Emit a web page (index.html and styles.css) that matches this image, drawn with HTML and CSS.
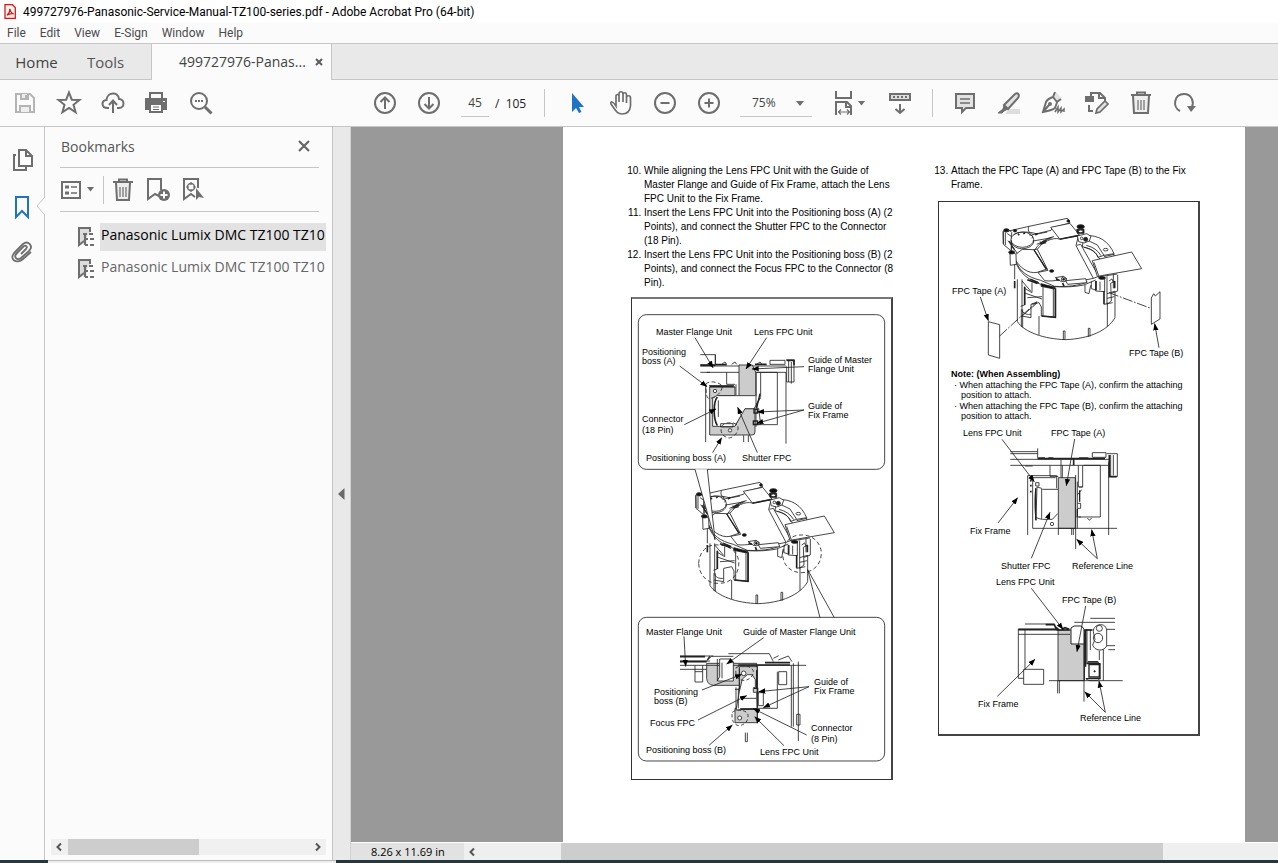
FILE: index.html
```html
<!DOCTYPE html>
<html lang="en">
<head>
<meta charset="utf-8">
<meta name="viewport" content="width=device-width, initial-scale=1">
<title>499727976-Panasonic-Service-Manual-TZ100-series.pdf - Adobe Acrobat Pro (64-bit)</title>
<link rel="stylesheet" href="styles.css">
</head>
<body>
<div class="app">
  <header class="titlebar">
    <svg class="app-icon" viewBox="0 0 12 15" aria-hidden="true"><path d="M1 .7H8.5L11.3 3.5V14.3H1Z" fill="#fff1f0" stroke="#c8201c" stroke-width="1.3"/><path d="M3 11.2C5 9.5 6 7 5.9 4.8C6.5 8 8 9.5 9.7 9.8C7 9.2 5 9.8 3 11.2Z" fill="none" stroke="#c8201c" stroke-width="1.2"/></svg>
    <span>499727976-Panasonic-Service-Manual-TZ100-series.pdf - Adobe Acrobat Pro (64-bit)</span>
  </header>
  <nav class="menubar" aria-label="Menu">
    <button>File</button><button>Edit</button><button>View</button><button>E-Sign</button><button>Window</button><button>Help</button>
  </nav>
  <div class="tabs">
    <button class="tab">Home</button>
    <button class="tab tab-tools">Tools</button>
    <div class="tab-active"><span>499727976-Panas...</span>
      <button class="tab-close" aria-label="Close tab"><svg viewBox="0 0 8 8"><path d="M1 1L7 7M7 1L1 7" stroke="#5c5c5c" stroke-width="2"/></svg></button>
    </div>
  </div>

  <div class="toolbar" role="toolbar" aria-label="Tools">
    <div class="group">
      <button class="tool pale" aria-label="Save"><svg viewBox="-15 -15 30 30"><path d="M-9-9H5L9-5V9H-9Z"/><path d="M-4-9V-4H3V-9M-5 9V3H5V9" fill="#eee"/><path d="M1-8V-5"/></svg></button>
      <button class="tool" aria-label="Star"><svg viewBox="-15 -15 30 30"><path d="M0-10.5L2.8-3.3 10.5-3 4.5 1.8 6.6 9.3 0 5-6.6 9.3-4.5 1.8-10.5-3-2.8-3.3Z"/></svg></button>
      <button class="tool" aria-label="Upload"><svg viewBox="-15 -15 30 30"><path d="M-4 5H-5.5C-12 5-12-3-6.5-3C-6-11 5-12 6-4C12-4 12 5 6 5H4M0 10V-2M-4 2L0-2.5 4 2"/></svg></button>
      <button class="tool" aria-label="Print"><svg viewBox="-14 -15 30 30"><path d="M-6-4V-10H6V-4"/><path d="M-10-4H10V6H-10Z" fill="#6e6e6e"/><path d="M-6 1H6V9H-6Z" fill="#fbfbfb"/><path d="M-3 4H3M-3 6.500H3" stroke-width="1"/><path d="M7-1.500H9" stroke="#fff" stroke-width="1"/></svg></button>
      <button class="tool" aria-label="Search"><svg viewBox="-15 -15 30 30"><circle cx="-2" cy="-2" r="8"/><path d="M4 4L10.500 10.500" stroke-width="3"/><path d="M-6-2H-4M-3-2H-1M0-2H2"/></svg></button>
    </div>
    <div class="group group-page">
      <button class="tool" aria-label="Previous page"><svg viewBox="-15 -15 30 30"><circle r="10"/><path d="M0 6V-5M-4.500-1L0-5.500 4.500-1"/></svg></button>
      <button class="tool" aria-label="Next page"><svg viewBox="-15 -15 30 30"><circle r="10"/><path d="M0-6V5M-4.500 1L0 5.500 4.500 1"/></svg></button>
      <input class="page-no" value="45" aria-label="Page number">
      <span class="page-count">/&nbsp; 105</span>
    </div>
    <div class="group group-view">
      <button class="tool" aria-label="Select"><svg viewBox="-15 -15 30 30"><path d="M-5-10V9L-1 5 2 10 4.500 9 2 4H7Z" fill="#1f72c6" stroke="none"/></svg></button>
      <button class="tool" aria-label="Hand"><svg viewBox="-15 -15 30 30"><path d="M-5 3V-7C-5-9-2-9-2-7V-1V-9C-2-12 2-12 2-9V-1V-8C2-11 5.500-11 5.500-8V0V-5C5.500-8 9.500-8 9.500-5V3C9 8 6 11 1 11C-4 11-5 8-10 1C-11-2-8-2-5 3Z" stroke-width="1.700"/></svg></button>
      <button class="tool" aria-label="Zoom out"><svg viewBox="-15 -15 30 30"><circle r="10"/><path d="M-4.500 0H4.500"/></svg></button>
      <button class="tool" aria-label="Zoom in"><svg viewBox="-15 -15 30 30"><circle r="10"/><path d="M-4.500 0H4.500M0-4.500V4.500"/></svg></button>
      <div class="zoom"><select aria-label="Zoom level"><option>75%</option></select><svg class="zoom-caret" viewBox="0 0 8 5"><path d="M0 0H8L4 5Z"/></svg></div>
      <button class="tool tool-fit" aria-label="Fit width"><svg viewBox="-15 -15 30 30"><path d="M-7-12V-5H8V-12M-7 12V-1H4L8 3V12M3-1V4H8"/><path d="M-4 9H6M-2 6.500L-4.500 9-2 11.500M4 6.500L6.500 9 4 11.500" stroke-width="1.200"/></svg><svg class="caret" viewBox="0 0 8 5"><path d="M0 0H7L3.500 4.500Z"/></svg></button>
      <button class="tool" aria-label="Page display"><svg viewBox="-15 -15 30 30"><path d="M-10-9H10V-3H-10Z" fill="#ddd"/><path d="M-7-6H-5M-3-6H-1M1-6H3M5-6H7M0 1V10M-4.500 6L0 10 4.500 6"/></svg></button>
    </div>
    <div class="group group-edit">
      <button class="tool" aria-label="Comment"><svg viewBox="-15 -15 30 30"><path d="M-9-9H9V5H1L-3 9V5H-9Z" fill="#e2e2e2"/><path d="M-5-4H5M-5 0H5" stroke-width="1.300"/></svg></button>
      <button class="tool" aria-label="Highlight"><svg viewBox="-15 -15 30 30"><path d="M0 6H11V11H-4Z" fill="#ddd" stroke="none"/><path d="M-5 2L6-9C9-11 11-8 9-5L-1 6Z" fill="#e2e2e2"/><path d="M-5 2L-1 6-5 8-7 10H-11L-6 6Z" fill="#6e6e6e" stroke-width="1"/></svg></button>
      <button class="tool" aria-label="Sign"><svg viewBox="-15 -15 30 30"><path d="M0-6L3-11 8-5 5-2Z" fill="#e2e2e2" stroke="none"/><path d="M2-11L0-6C-3-5-6-3-7-1L-10 9C-5 8 0 7 2 5C3 2 4 0 4-1L8-4M0-6L4-1M-10 9L-4 2"/><circle cx="-3" cy="1" r="1"/><path d="M2 9L5 4V9L8 5V9L11 6V9" stroke-width="1.500"/></svg></button>
      <button class="tool" aria-label="Edit PDF"><svg viewBox="-15 -15 30 30"><path d="M-6-7V-10H3L8-5V-2M2-10V-5H8M-8 2V8H-4"/><path d="M-12-7H-3V-1H-12Z" fill="#6e6e6e" stroke="none"/><path d="M-1 10L0 6 8-2 11 1 3 9Z" fill="#e2e2e2" stroke-width="1.700"/></svg></button>
      <button class="tool" aria-label="Delete"><svg viewBox="-15 -15 30 30"><path d="M-8-7L-7 10H7L8-7" fill="#eee"/><path d="M-10-8H10M-4-8V-10.500H4V-8"/><path d="M-3-3V7M0-3V7M3-3V7" stroke-width="1.200"/></svg></button>
      <button class="tool" aria-label="Rotate"><svg viewBox="-15 -15 30 30"><path d="M-5 8C-13 4-11-9-1-9C7-9 9-1 7 4"/><path d="M2 3L11 3 6 9Z" fill="#6e6e6e" stroke="none"/></svg></button>
    </div>
  </div>

  <main class="work">
    <nav class="rail" aria-label="Navigation panes">
      <button aria-label="Page thumbnails"><svg viewBox="-15 -15 30 30"><path d="M-3-10H4L10-4V6H-3ZM4-10V-4H10M-6-5H-8V10H4V7"/></svg></button>
      <button class="current" aria-label="Bookmarks"><svg viewBox="-15 -15 30 30"><path d="M-6-9H6V11L0 5-6 11Z"/></svg></button>
      <button aria-label="Attachments"><svg viewBox="-15 -15 30 30"><path d="M-1 2L4-3C6-5 4-7 2-6L-5 1C-9 5-5 9-1 6L7-1C12-6 6-12 1-8L-6-1C-15 7-5 13 1 7L9 0" stroke-width="1.800"/></svg></button>
      <svg class="notch" viewBox="0 0 8 16" aria-hidden="true"><path d="M8 0V16H7L0 8 7 0Z" fill="#fbfbfb" stroke="none"/><path d="M7 0L0 8 7 16" fill="none" stroke="#c6c6c6"/></svg>
    </nav>
    <aside class="panel">
      <div class="panel-head"><h2>Bookmarks</h2><button aria-label="Close panel"><svg viewBox="0 0 12 12"><path d="M1 1L11 11M11 1L1 11" stroke="#666" stroke-width="2.200"/></svg></button></div>
      <div class="panel-tools">
        <button class="options" aria-label="Options"><svg viewBox="-10 -15 20 30"><path d="M-9-8H9V8H-9Z"/><path d="M-6-3H-2M-6 3H-2" stroke-width="3"/><path d="M0-3H6M0 3H6" stroke-width="1.500"/></svg><svg class="caret" viewBox="0 0 8 5"><path d="M0 0H7L3.500 4.500Z"/></svg></button>
        <button class="sq" aria-label="Delete bookmark"><svg viewBox="-15 -15 30 30"><path d="M-7-7L-6 10H6L7-7" fill="#eee"/><path d="M-10-8H10M-4-8V-10.500H4V-8"/><path d="M-3-3V7M0-3V7M3-3V7" stroke-width="1.200"/></svg></button>
        <button class="sq" aria-label="New bookmark"><svg viewBox="-15 -15 30 30"><path d="M1 6L-3 4-10 9V-11H3V0"/><circle cx="6" cy="5" r="6" fill="#6e6e6e" stroke="none"/><path d="M2.500 5H9.500M6 1.500V8.500" stroke="#fff"/></svg></button>
        <button class="sq" aria-label="Find current bookmark"><svg viewBox="-15 -15 30 30"><path d="M5-2V-11H-9V9L-2 4 2 7"/><circle cx="-2" cy="-3" r="3.500" stroke-width="1.500"/><path d="M-2-8V-5M-2-1V2M-7-3H-4M0-3H3" stroke-width="1.200"/><path d="M3-2V10L6 7 11 8Z" fill="#6e6e6e" stroke="none"/></svg></button>
      </div>
      <ul class="tree">
        <li><svg viewBox="0 0 16 20"><path d="M6 14L1 18V1H12V5" fill="#ddd"/><path d="M5 7H9M7 7V18M7 12H10M7 18H10M11 7H15M12 12H16M12 18H16" stroke-width="2.200"/></svg><a class="selected" href="#page">Panasonic Lumix DMC TZ100 TZ10</a></li>
        <li><svg viewBox="0 0 16 20"><path d="M6 14L1 18V1H12V5" fill="#ddd"/><path d="M5 7H9M7 7V18M7 12H10M7 18H10M11 7H15M12 12H16M12 18H16" stroke-width="2.200"/></svg><a href="#page">Panasonic Lumix DMC TZ100 TZ10</a></li>
      </ul>
      <div class="hscroll"><svg viewBox="0 0 16 16"><path d="M10 4.500L6.500 8 10 11.500"/></svg><div class="track"><div class="thumb"></div></div><svg viewBox="0 0 16 16"><path d="M6 4.500L9.500 8 6 11.500"/></svg></div>
    </aside>
    <button class="gutter" aria-label="Collapse panel"><svg viewBox="0 0 7 12"><path d="M6.500 0V12L0 6Z" fill="#6a6a6a"/></svg></button>
    <section class="doc">
      <div class="canvas">
        <article class="page" id="page">
          <div class="column">
            <ol start="10">
              <li>While aligning the Lens FPC Unit with the Guide of<br>Master Flange and Guide of Fix Frame, attach the Lens<br>FPC Unit to the Fix Frame.</li>
              <li>Insert the Lens FPC Unit into the Positioning boss (A) (2<br>Points), and connect the Shutter FPC to the Connector<br>(18 Pin).</li>
              <li>Insert the Lens FPC Unit into the Positioning boss (B) (2<br>Points), and connect the Focus FPC to the Connector (8<br>Pin).</li>
            </ol>
            <figure class="fig fig-left">
              <svg viewBox="632 299 259 480" role="img" aria-label="Lens FPC Unit attachment">
                <defs>
                  <marker id="arrow" markerUnits="userSpaceOnUse" markerWidth="22" markerHeight="18" refX="20" refY="9" orient="auto"><path d="M0 1L21 9 0 17Z" fill="#000" stroke="none"/></marker>
                  <g id="lens">
                    <path d="M232 160V235M240 235V362C262 394 320 414 385 416C455 413 510 390 533 350V270M252 325V378M256 325V380M305 345V402M378 417V390H383V417M453 408V382H458V407M510 305V377"/>
                    <path d="M229 165C240 205 258 230 305 248C330 258 390 262 440 252L475 237M235 180C248 212 270 228 310 238L352 256C390 258 425 254 450 243M229 165L255 145L290 146 326 205 300 214C270 220 245 195 235 178M290 146L300 144 332 198 326 205"/>
                    <path d="M275 76L390 52 398 66 345 80 341 88 287 101C274 96 270 86 275 76Z" fill="#fff"/>
                    <path d="M440 104C485 100 515 122 530 158L500 163L482 169C478 155 465 145 435 137Z" fill="#fff"/>
                    <path d="M300 145C315 123 345 108 367 114L423 105 416 134 468 232 395 247C380 228 350 244 322 239L302 214L332 208Z" fill="#fff"/>
                    <path d="M418 133L430 130 484 226 468 232M292 147C310 120 335 109 350 107M298 130L340 112"/>
                    <path d="M340 79L398 67 426 102 367 114Z" fill="#fff"/>
                    <path d="M367 115L426 103M290 147L328 205" stroke-width="4"/>
                    <path d="M197 91L215 86 223 94 222 150 198 130ZM198 92V129M204 94V132M212 119L240 157M210 91L275 76M210 98L222 106V146"/>
                    <ellipse cx="255" cy="116" rx="34" ry="23" fill="#fff"/><path d="M221 117C222 135 240 145 260 143C280 140 290 130 289 118M228 102C240 92 272 90 300 99L330 93M287 120L345 110M307 123L327 126M275 101L286 105 284 112"/>
                    <path d="M500 163L480 132 455 120M530 158V178M482 169L492 177M440 139C462 142 477 155 482 169M447 133C467 138 482 148 491 164M500 167L530 160"/>
                    <path d="M465 179L583 153 613 203 480 226Z" fill="#fff"/><path d="M470 184L484 224"/>
                    <path d="M218 158L228 155 236 160 237 190 219 193Z" fill="#fff"/>
                    <path d="M254 235V330C262 340 270 341 281 340V310L305 305 312 318V345L355 349V262M317 255V346M348 260V347M262 256V312L250 316M262 276L314 294M254 240L280 270M284 245V275L262 262M270 290L314 287M281 340V350L252 345"/>
                    <path d="M354 262V349L313 345M232 240V262M262 258V312" stroke-width="5"/>
                    <path d="M475 240V270L502 272V228M488 242V268M509 226V310L522 300 520 247 533 240M541 222V270L522 277M509 278L532 271M509 292L531 287M462 241V263L475 267M482 228L540 219M500 310L526 305M443 252V274L455 278 460 253M528 222V262M515 240L524 234 528 244"/>
                    <path d="M500 270V310M532 240V262M476 240V268" stroke-width="5"/>
                    <g fill="#111"><ellipse cx="207" cy="88" rx="8" ry="5"/><ellipse cx="233" cy="89" rx="5" ry="4"/><ellipse cx="223" cy="154" rx="9" ry="5"/><ellipse cx="430" cy="77" rx="11" ry="6"/><path d="M418 85H440V97H420Z"/><ellipse cx="343" cy="210" rx="6" ry="4"/><ellipse cx="494" cy="231" rx="10" ry="4"/><path d="M216 120L233 148 228 143ZM280 234L304 244 298 248ZM312 248L354 260 350 264 311 256Z"/><circle cx="393" cy="60" r="4"/></g>
                    <path d="M420 105L448 98 461 106 456 120 440 126 424 122Z" fill="#fff"/>
                    <circle cx="445" cy="115" r="6" fill="#222"/>
                    <g fill="#fff"><ellipse cx="430" cy="91" rx="7" ry="4"/><circle cx="433" cy="112" r="4"/><path d="M354 230L378 226 389 234 372 242Z"/><circle cx="379" cy="235" r="7"/><path d="M385 239L445 233 449 245 391 250Z"/><ellipse cx="505" cy="146" rx="7" ry="4"/></g>
                    <circle cx="379" cy="235" r="3" fill="#111"/>
                    <path d="M242 102L246 99M258 98L263 96M294 102L301 97M308 129L324 124M316 122L328 120M270 236L299 247M356 234L366 238M376 246L380 256" stroke-width="5"/>
                  </g>
                </defs>
                <g class="art" transform="translate(630 297) scale(.33333)">
                  <rect x="25" y="53" width="739" height="464" rx="24"/>
                  <path d="M211 173H256V203H211M211 207H468M211 226H468M256 173V203M420 203V190H465V202H420M468 189H492V255H470V208M476 192V255M484 195V260M230 226H240M290 226V262M290 262H315M468 226V440M227 262V435M318 262V295M341 415V435M355 415V435"/>
                  <path d="M211 205H256M256 203H290M375 202H410M470 190H492V205" stroke-width="5"/><path d="M275 202L285 195 290 202M305 202L315 195 320 202M380 202L390 195 396 202"/>
                  <path d="M239 270H315V296H260L248 304V388H315L343 335H375V405Q375 414 366 414H239Z" fill="#ccc"/>
                  <path d="M327 204H367L378 228V310H327Z" fill="#ccc"/>
                  <path d="M260 296H375L392 302 372 335H345L315 387H258C249 368 250 315 260 296Z" fill="#fff" stroke="none"/>
                  <path d="M264 296H375M392 302L372 335H345L315 387"/>
                  <path d="M237 266H312V272M380 226H392V298L380 320V334H386L392 382H374M378 226V390M392 226H442V383H380M265 310V360M272 380H309V390H272Z"/>
                  <path d="M262 300C250 315 249 365 262 386M239 268H310" stroke-width="5"/>
                  <path d="M390 290L380 333M372 337H383V348H372ZM370 372H383V383H370Z" stroke-width="4"/>
                  <path d="M227 261C240 248 275 257 277 270C272 290 255 305 235 304C225 295 230 275 227 261ZM274 389C282 375 311 374 322 384C330 398 316 420 298 423C280 420 270 410 274 389Z" stroke-dasharray="12 7"/>
                  <g fill="#fff"><circle cx="255" cy="282" r="5"/><circle cx="300" cy="400" r="5"/></g>
                  <g class="leaders"><path d="M195 122L249 212"/><path d="M410 122L348 216"/><path d="M149 207L231 269"/><path d="M522 209L366 216"/><path d="M163 383L258 336"/><path d="M522 339L382 345"/><path d="M522 339L380 379"/><path d="M248 467L275 422"/><path d="M382 467L323 331"/></g>
                </g>
                <g class="art" transform="translate(630 465) scale(.33333)"><use href="#lens"/><path d="M195 13L255 224 232 13" fill="#fff"/><path d="M570 458L533 314 613 458"/><path d="M206 295C207 258 235 236 265 240C310 240 330 275 326 302C323 333 300 356 265 355C232 356 207 330 206 295ZM458 265C460 230 485 209 515 210C550 209 574 235 574 266C573 300 548 323 515 323C480 323 457 298 458 265Z" stroke-dasharray="12 8"/></g>
                <g class="art" transform="translate(630 610) scale(.33333)">
                  <rect x="25" y="22" width="739" height="431" rx="24"/>
                  <path d="M230 160H380V226H250Q231 224 230 205Z" fill="#ccc"/>
                  <path d="M328 170H382V338H315V295H328Z" fill="#ccc"/>
                  <path d="M150 138H250M150 153H240M150 166H528M150 178H230M195 166V216H218V166M195 185H218M295 131H418L430 155M230 152L245 139H310M430 145L446 137M445 150L475 138 486 155M442 185V295H380M382 168V340M446 185H470V224H446ZM484 166V350M490 160V350M505 155V393M500 313V345H510V313ZM346 368V395H352V368"/>
                  <path d="M150 140H225M150 155H230M325 165H480M405 158L480 158" stroke-width="5"/>
                  <path d="M269 147H300L310 155V213H262L269 200V160ZM337 207L352 194H366L376 209V233H370V247H380L381 297L318 300 328 245Z" fill="#fff"/>
                  <path d="M262 147V213M333 265H380M333 297H380M325 235V295M315 238H327M318 232V298M385 248H400V287H385ZM328 175V238M276 158V205" />
                  <path d="M372 235H383V251M330 297H382M380 180V233M232 150L240 138" stroke-width="4"/>
                  <path d="M318 173C335 163 360 165 370 182C370 199 358 212 338 211C324 209 315 200 318 173ZM307 307C317 297 343 299 353 310C358 328 347 345 327 347C310 345 303 327 307 307Z" stroke-dasharray="10 7"/>
                  <g fill="#fff"><circle cx="341" cy="190" r="7"/><circle cx="329" cy="324" r="6"/></g>
                  <g class="leaders"><path d="M162 79L167 169"/><path d="M401 83L290 162"/><path d="M216 240L335 193"/><path d="M204 330L350 257"/><path d="M537 230L386 245"/><path d="M537 230L400 293"/><path d="M530 375L370 296"/><path d="M237 406L307 345"/><path d="M462 407L374 320"/></g>
                </g>
                <g class="labels">
                  <text x="656" y="335">Master Flange Unit</text><text x="754" y="335">Lens FPC Unit</text><text x="642" y="355">Positioning</text><text x="642" y="364">boss (A)</text><text x="808" y="363">Guide of Master</text><text x="808" y="372">Flange Unit</text><text x="808" y="409">Guide of</text><text x="808" y="418">Fix Frame</text><text x="642" y="422">Connector</text><text x="642" y="433">(18 Pin)</text><text x="646" y="461">Positioning boss (A)</text><text x="742" y="461">Shutter FPC</text>
                  <text x="646" y="635">Master Flange Unit</text><text x="743" y="635">Guide of Master Flange Unit</text><text x="654" y="695">Positioning</text><text x="654" y="704">boss (B)</text><text x="814" y="685">Guide of</text><text x="814" y="694">Fix Frame</text><text x="650" y="726">Focus FPC</text><text x="811" y="731">Connector</text><text x="811" y="742">(8 Pin)</text><text x="646" y="753">Positioning boss (B)</text><text x="760" y="755">Lens FPC Unit</text>
                </g>
              </svg>
            </figure>
          </div>
          <div class="column">
            <ol start="13"><li>Attach the FPC Tape (A) and FPC Tape (B) to the Fix<br>Frame.</li></ol>
            <figure class="fig fig-right">
              <svg viewBox="939 202 259 532" role="img" aria-label="FPC Tape attachment">
                <g class="art" transform="translate(935 195) scale(.33333)"><use href="#lens" x="7" y="18"/><path d="M160 380L194 389V490L160 480ZM649 309L656 296 661 303 675 290V372L649 388ZM306 324L258 366M290 327L307 321"/><path d="M194 423L306 320M522 293L645 339" stroke-dasharray="30 5 5 5"/><g class="leaders"><path d="M136 306L160 377"/><path d="M672 458L659 386"/></g></g>
                <g class="art" transform="translate(935 365) scale(.33333)">
                  <path d="M226 260H308M308 250V280M226 266H308M226 283H525M226 301H522M345 301V334H370M270 303H293M278 332V510M278 332H365V370M293 347V490M290 338H362M472 276V263H513V277H472M515 266H547V335H527V270M521 290V510M535 270V331M310 278H330M340 278H355M432 278H460M430 301V366H443V301M432 366H443"/>
                  <path d="M308 281H510M416 283V301M290 347H285M290 362H285M290 380H285M523 270V335H545" stroke-width="5"/>
                  <path d="M306 366L320 370V463L303 458ZM322 373H370M322 463H352L368 446M302 370C298 405 299 440 304 466M446 301H496V456H431M427 390L440 374M428 415H437V430H428M424 456H438M457 460L463 465 470 460M302 353H312V363H302Z"/>
                  <path d="M302 370V466M434 376V410M427 432V455" stroke-width="4"/>
                  <path d="M370 338H421V490H370Z" fill="#ccc"/><path d="M378 283V338M382 301V338M293 490H546M370 490V510M410 490V510M415 490V510M422 330V552M427 350V490" /><circle cx="351" cy="477" r="5"/>
                  <g class="leaders"><path d="M201 223L298 350"/><path d="M419 222L394 362"/><path d="M189 474L248 398"/><path d="M289 580L345 442"/><path d="M487 581L425 523"/><path d="M487 581L470 494"/></g>
                </g>
                <g class="art" transform="translate(935 570) scale(.33333)">
                  <path d="M369 180H448V332H369Z" fill="#ccc"/><path d="M250 177H365M250 193H405M250 177V325H266M270 180V298M266 298H326V343H266ZM270 162H358M342 332H563M368 332V370M373 332V370M447 180V395M448 180H478M448 190V330M456 177V275M466 180V240M418 157H540M466 145H540M510 178H540M515 227H540M520 239H540M505 230V332M493 242V270"/>
                  <path d="M250 179H365M332 164H358L365 180H404M360 170L375 182M380 178L390 173 403 178M448 180H471M452 182V290M458 276H490" stroke-width="5"/>
                  <path d="M408 222V174L417 168H439L447 177V222Z" fill="#fff" stroke-width="3"/><path d="M475 185C474 161 512 155 515 180V228C505 247 478 242 473 225L480 208Z" fill="#fff"/><circle cx="489" cy="204" r="14"/><circle cx="493" cy="175" r="9"/><path d="M455 281H495V326H453M462 284V321H493V284Z" fill="#fff" stroke-width="4"/><circle cx="479" cy="304" r="2" fill="#000"/><path d="M448 283L460 275H488L495 285M452 326L462 332H488L495 325"/>
                  <g class="leaders"><path d="M289 55L384 178"/><path d="M452 108L426 245"/><path d="M187 379L300 268"/><path d="M511 427L449 365"/><path d="M511 427L492 333"/></g>
                </g>
                <g class="labels">
                  <text x="952" y="294">FPC Tape (A)</text><text x="1129" y="356">FPC Tape (B)</text><text x="951" y="377" class="strong">Note: (When Assembling)</text><text x="954" y="388">· When attaching the FPC Tape (A), confirm the attaching</text><text x="961" y="398">position to attach.</text><text x="954" y="409">· When attaching the FPC Tape (B), confirm the attaching</text><text x="961" y="419">position to attach.</text><text x="963" y="436">Lens FPC Unit</text><text x="1051" y="436">FPC Tape (A)</text><text x="970" y="534">Fix Frame</text><text x="1001" y="569">Shutter FPC</text><text x="1072" y="569">Reference Line</text><text x="996" y="585">Lens FPC Unit</text><text x="1062" y="603">FPC Tape (B)</text><text x="978" y="707">Fix Frame</text><text x="1080" y="721">Reference Line</text>
                </g>
              </svg>
            </figure>
          </div>
        </article>
      </div>
      <div class="status"><span class="size">8.26 x 11.69 in</span><svg viewBox="0 0 16 16"><path d="M10 4.500L6.500 8 10 11.500"/></svg><div class="track"><div class="thumb"></div></div></div>
    </section>
  </main>
  <footer class="edge"><span></span></footer>
</div>
</body>
</html>
```
FILE: styles.css
```css
* { box-sizing: border-box; }
body { margin: 0; font-family: "Open Sans", "Noto Sans", sans-serif; color: #444; background: #fbfbfb; }
button { border: 0; padding: 0; margin: 0; background: none; font: inherit; color: inherit; }
svg { display: block; flex: none; }
.app { height: 100vh; display: flex; flex-direction: column; overflow: hidden; }

.titlebar { height: 23px; display: flex; align-items: center; gap: 7px; padding-left: 4px; background: #fff; color: #000; font: 12px Roboto, sans-serif; white-space: nowrap; }
.app-icon { width: 12px; height: 15px; }
.menubar { height: 21px; display: flex; align-items: center; gap: 14px; padding: 0 0 1px 7px; border-bottom: 1px solid #c6c6c6; font: 12px Roboto, sans-serif; color: #4b4b4b; }

.tabs { height: 36px; display: flex; background: #e9e9e9; border-bottom: 1px solid #c6c6c6; font-size: 15px; line-height: 34px; }
.tab { padding-left: 15px; }
.tab-tools { padding-left: 29px; width: 93px; text-align: left; color: #555; }
.tab:first-child { width: 58px; }
.tab-active { display: flex; align-items: center; justify-content: space-between; width: 181px; height: 36px; margin-left: auto; padding: 0 8px 0 27px; background: #fbfbfb; border: solid #c6c6c6; border-width: 0 1px; font-size: 14px; }
.tabs .tab-active { margin-left: 0; }
.tab-close svg { width: 8px; height: 8px; }

.toolbar { height: 47px; display: flex; align-items: center; border-bottom: 1px solid #c6c6c6; padding-left: 3px; font-size: 12px; flex: none; }
.group { display: flex; align-items: center; height: 46px; flex: none; }
.tool { width: 44px; height: 44px; display: flex; align-items: center; justify-content: center; }
.tool svg, .rail button svg, .sq svg { width: 30px; height: 30px; }
.tool svg, .rail svg, .panel-tools svg, .tree svg { fill: none; stroke: #6e6e6e; stroke-width: 2; }
.pale svg { stroke: #b4b4b4; }
.group-page { margin-left: 140px; width: 181px; }
.page-no { width: 28px; height: 28px; margin-left: 10px; border: 0; border-bottom: 1px solid #c6c6c6; padding: 0; text-align: center; background: none; font: inherit; color: #444; }
.page-count { margin-left: 6px; color: #222; white-space: nowrap; }
.group-view::before, .group-edit::before { content: ""; width: 1px; height: 28px; background: #c6c6c6; margin-right: 10px; }
.group-edit::before { margin-left: 10px; }
.zoom { position: relative; width: 72px; height: 28px; margin-left: 9px; border-bottom: 1px solid #c6c6c6; }
.zoom select { appearance: none; width: 100%; height: 100%; padding: 0 0 0 12px; border: 0; background: none; font: inherit; color: #444; }
.zoom-caret { position: absolute; right: 8px; top: 12px; width: 8px; height: 5px; pointer-events: none; fill: #6e6e6e; }
.tool-fit { width: 66px; padding-left: 4px; }
.tool .caret, .panel-tools .caret { width: 8px; height: 5px; fill: #6e6e6e; stroke: none; }

.work { flex: 1; min-height: 0; display: flex; }
.rail { width: 45px; flex: none; border-right: 1px solid #c6c6c6; padding-top: 10px; position: relative; }
.rail button { width: 44px; height: 46px; display: flex; align-items: center; justify-content: center; }
.rail .current svg { stroke: #1f72c6; }
.rail .notch { position: absolute; right: -1px; top: 71px; width: 8px; height: 16px; stroke-width: 1; }
.panel { width: 288px; flex: none; border-right: 1px solid #c6c6c6; display: flex; flex-direction: column; padding: 0 6px 5px; }
.panel-head { height: 41px; margin: 0 7px 0 9px; display: flex; align-items: center; justify-content: space-between; border-bottom: 1px solid #c6c6c6; padding: 0 9px 2px 1px; }
.panel h2 { margin: 0; font-size: 14px; font-weight: 400; color: #555; }
.panel-head svg { width: 12px; height: 12px; }
.panel-tools { height: 44px; margin: 0 7px 0 9px; padding-left: 1px; display: flex; align-items: center; border-bottom: 1px solid #c6c6c6; }
.options { display: flex; align-items: center; gap: 6px; height: 28px; width: 43px; border-right: 1px solid #c6c6c6; }
.options svg:first-child { width: 20px; height: 30px; }
.sq { width: 34px; display: flex; justify-content: center; margin-left: 1px; }
.options + .sq { margin-left: 2px; }
.tree { list-style: none; margin: 9px 0 0; padding: 0 0 0 27px; }
.tree li { display: flex; align-items: center; height: 32px; gap: 6px; }
.tree svg { width: 16px; height: 20px; }
.tree a { flex: 1; min-width: 0; height: 28px; line-height: 24px; padding-left: 1px; white-space: nowrap; color: #666; text-decoration: none; font-size: 14px; }
.tree .selected { background: #e2e2e2; color: #000; }
.hscroll { margin-top: auto; height: 16px; display: flex; align-items: center; background: #f0f0f0; }
.hscroll svg, .status svg { width: 16px; height: 16px; fill: none; stroke: #555; stroke-width: 2; }
.track { flex: 1; height: 100%; }
.thumb { height: 100%; background: #cdcdcd; }
.hscroll .thumb { width: 54%; margin-left: 1px; }
.gutter { width: 18px; flex: none; background: #e9e9e9; border-right: 1px solid #d2d2d2; display: flex; align-items: center; justify-content: center; }
.gutter svg { width: 7px; height: 12px; }

.doc { flex: 1; min-width: 0; display: flex; flex-direction: column; }
.canvas { flex: 1; min-height: 0; overflow: hidden; background: #999; display: flex; justify-content: flex-end; padding-right: 33px; }
.page { flex: none; width: 682px; padding: 37px 38px 0 64px; background: #fff; display: grid; grid-template-columns: 1fr 1fr; column-gap: 34px; align-items: start; color: #000; font: 10px/14px "Liberation Sans", Arial, sans-serif; white-space: nowrap; }
.page ol { margin: 0; padding-left: 17px; }
.fig { border: 1px solid #333; border-right: 2px solid #444; margin: 7px 0 0 4px; width: 262px; }
.fig-left { border-top: 2px solid #777; }
.fig-right { border-bottom: 2px solid #444; margin-top: 9px; }
.fig svg { width: 100%; height: auto; }
.art { fill: none; stroke: #222; stroke-width: 2.5; }
.leaders path { marker-end: url(#arrow); }
.labels { font-size: 9px; fill: #000; }
.strong { font-weight: 700; }

.status { height: 18px; flex: none; display: flex; align-items: center; background: #efefef; border-top: 1px solid #fff; }
.size { width: 113px; height: 100%; line-height: 17px; padding-left: 20px; background: #e2e2e2; color: #000; font-size: 11px; }
.status .thumb { width: 602px; margin-left: 81px; }
.edge { height: 3px; flex: none; background: #26363d; padding-left: 48px; }
.edge span { display: block; width: 288px; height: 100%; background: #eee; border-top: 1px solid #bbb; }
```
